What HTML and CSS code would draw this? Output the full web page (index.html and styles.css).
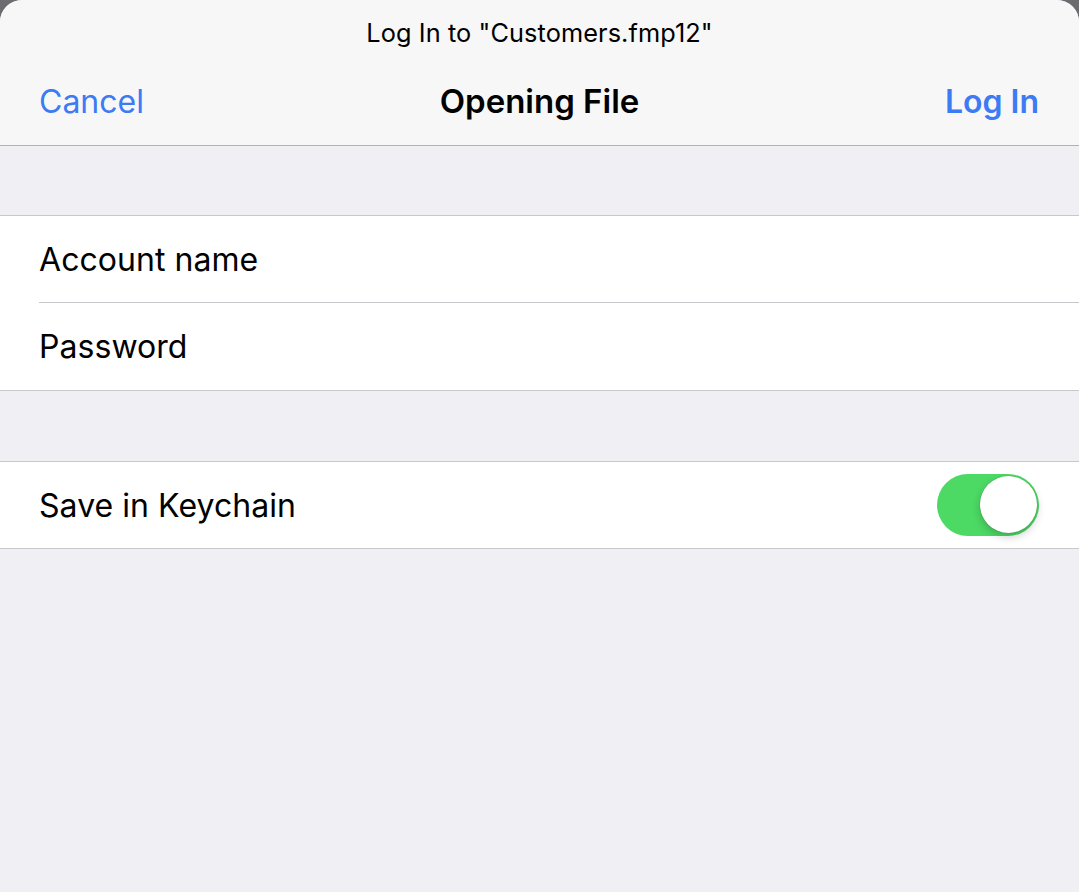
FILE: index.html
```
<!DOCTYPE html>
<html>
<head>
<meta charset="utf-8">
<link rel="stylesheet" href="styles.css">
</head>
<body>
<div class="sheet">
  <header class="header">
    <div class="subtitle">Log In to "Customers.fmp12"</div>
    <div class="nav">
      <span class="nav-btn">Cancel</span>
      <span class="nav-title">Opening File</span>
      <span class="nav-btn nav-strong">Log In</span>
    </div>
  </header>
  <div class="gap gap-first"></div>
  <div class="group">
    <div class="row row-sep"><span class="label">Account name</span></div>
    <div class="row row-last"><span class="label">Password</span></div>
  </div>
  <div class="gap gap-second"></div>
  <div class="group">
    <div class="row row-single">
      <span class="label">Save in Keychain</span>
      <span class="switch"><span class="knob"></span></span>
    </div>
  </div>
</div>
</body>
</html>
```

FILE: styles.css
```
html, body {
  margin: 0;
  padding: 0;
  height: 100%;
}
body {
  background: #6c6c70;
  font-family: Inter, "Noto Sans", "Liberation Sans", sans-serif;
  color: #000;
  overflow: hidden;
}
.sheet {
  min-height: 100%;
  background: #efeff4;
  border-radius: 22px 22px 0 0;
  overflow: hidden;
}
.header {
  background: #f7f7f7;
  border-bottom: 1px solid #b1b1b4;
  box-sizing: border-box;
  height: 146px;
  display: flex;
  flex-direction: column;
}
.subtitle {
  text-align: center;
  font-size: 25.3px;
  padding-top: 17px;
  line-height: 32px;
  letter-spacing: 0.1px;
}
.nav {
  display: flex;
  justify-content: space-between;
  align-items: center;
  padding: 0 40px 0 39px;
  margin-top: 32px;
  height: 40px;
  position: relative;
}
.nav-btn {
  color: #3c7bf4;
  font-size: 32px;
}
.nav-strong {
  font-weight: 600;
}
.nav-title {
  font-size: 33px;
  font-weight: 600;
  position: absolute;
  left: 0;
  right: 0;
  text-align: center;
  pointer-events: none;
}
.gap-first { height: 69px; }
.gap-second { height: 70px; }
.group {
  background: #fff;
  border-top: 1px solid #c8c7cc;
  border-bottom: 1px solid #c8c7cc;
}
.row {
  display: flex;
  align-items: center;
  justify-content: space-between;
  padding-left: 39px;
  padding-right: 40px;
  box-sizing: border-box;
  position: relative;
}
.row-sep {
  height: 86px;
}
.row-sep::after {
  content: "";
  position: absolute;
  left: 39px;
  right: 0;
  bottom: -1px;
  height: 1px;
  background: #c8c7cc;
}
.row-last {
  height: 88px;
  padding-top: 1px;
}
.row-single {
  height: 86px;
}
.label {
  font-size: 32px;
  letter-spacing: 0.05px;
}
.switch {
  width: 102px;
  height: 62px;
  border-radius: 31px;
  background: #4cd964;
  position: relative;
}
.knob {
  position: absolute;
  right: 2px;
  top: 2px;
  width: 57px;
  height: 57px;
  border-radius: 50%;
  background: #fff;
  box-shadow: 0 4px 9px rgba(0,0,0,0.2), 0 0 1px rgba(0,0,0,0.35);
}
```
